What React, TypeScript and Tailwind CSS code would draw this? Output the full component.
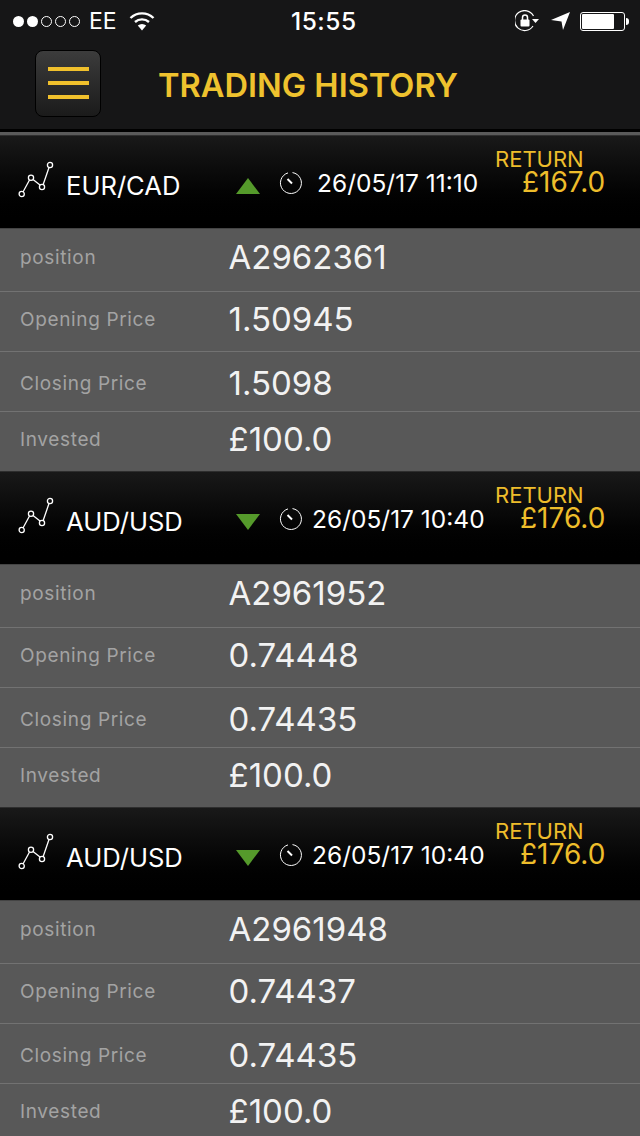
const trades = [
  { pair: "EUR/CAD", up: true, date: "26/05/17 11:10", ret: "£167.0", position: "A2962361", open: "1.50945", close: "1.5098" },
  { pair: "AUD/USD", up: false, date: "26/05/17 10:40", ret: "£176.0", position: "A2961952", open: "0.74448", close: "0.74435" },
  { pair: "AUD/USD", up: false, date: "26/05/17 10:40", ret: "£176.0", position: "A2961948", open: "0.74437", close: "0.74435" },
];

function ChartIcon() {
  return (
    <svg width="38" height="38" viewBox="0 0 38 38" fill="none" stroke="white" strokeWidth="1.3" className="shrink-0">
      <path d="M5 32 L11.5 20 M15 19.5 L22 25 M25 25 L31 7.5" />
      <circle cx="3.7" cy="34" r="2.6" />
      <circle cx="13" cy="17.7" r="2.6" />
      <circle cx="24" cy="27" r="2.6" />
      <circle cx="32" cy="5" r="2.6" />
    </svg>
  );
}

function ClockIcon() {
  return (
    <svg width="24" height="24" viewBox="0 0 24 24" fill="none" stroke="white" className="shrink-0">
      <path d="M13.5 1.6 A10.5 10.5 0 1 1 9 1.9" strokeWidth="1" />
      <path d="M8.5 8 L13 12.5" strokeWidth="2" />
    </svg>
  );
}

function Row({ label, value, height, border }: { label: string; value: string; height: string; border?: boolean }) {
  return (
    <div className={`flex items-center ${height} ${border ? "border-b border-[#727272]" : ""}`}>
      <div className="w-[228.5px] pl-5 text-[19px] tracking-[0.65px] text-[#a3a3a3]">{label}</div>
      <div className="-mt-[2px] text-[33px] leading-none text-[#f2f2f2]">{value}</div>
    </div>
  );
}

function Trade({ trade }: { trade: (typeof trades)[number] }) {
  return (
    <section>
      <div className="flex h-[94px] items-center border-t border-[#2e2e2e] border-b-[#444] border-b bg-gradient-to-b from-[#191919] via-[#070707] to-black">
        <div className="ml-[18px] w-[48px] -mt-1.5">
          <ChartIcon />
        </div>
        <div className="w-[169px] text-[25.6px] text-white mt-[8px]">{trade.pair}</div>
        <svg width="26" height="16" viewBox="0 0 26 16" className="shrink-0 mt-2">
          <polygon points={trade.up ? "13,0 25,16 1,16" : "1,0 25,0 13,16"} fill="#559a2b" />
        </svg>
        <div className="ml-[18px] w-[27px] mt-[2px]">
          <ClockIcon />
        </div>
        <div className={`${trade.up ? "ml-[11px] w-[178px]" : "ml-[6px] w-[183px]"} text-[24.5px] leading-none text-white mt-[3px] whitespace-nowrap`}>
          {trade.date}
        </div>
        <div className="-mt-[22px] w-[113px] text-[#eebd2b]">
          <div className="text-[22px] leading-[22px]">RETURN</div>
          <div className={`${trade.up ? "pl-[27px]" : "pl-[25px]"} text-[28px] leading-[24px]`}>{trade.ret}</div>
        </div>
      </div>
      <div className="bg-[#585858]">
        <Row label="position" value={trade.position} height="h-[63px] pb-1" border />
        <Row label="Opening Price" value={trade.open} height="h-[60px] pb-[2px]" border />
        <Row label="Closing Price" value={trade.close} height="h-[60px] pt-[6px]" border />
        <Row label="Invested" value="£100.0" height="h-[59px] pb-[3px]" />
      </div>
    </section>
  );
}

export default function App() {
  return (
    <div className="h-[1136px] w-[640px] overflow-hidden bg-[#585858] font-['Inter','Liberation_Sans',sans-serif]">
      <header className="h-[135px] bg-[#161617]">
        <div className="flex h-10 items-center pl-[13px] pt-[2px] text-white">
          <div className="flex gap-[3px]">
            <span className="h-[11px] w-[11px] rounded-full bg-white" />
            <span className="h-[11px] w-[11px] rounded-full bg-white" />
            <span className="h-[11px] w-[11px] rounded-full border border-white" />
            <span className="h-[11px] w-[11px] rounded-full border border-white" />
            <span className="h-[11px] w-[11px] rounded-full border border-white" />
          </div>
          <span className="ml-[9px] w-[27px] text-[23px] leading-none">EE</span>
          <svg width="26" height="20" viewBox="0 0 26 20" className="ml-[13px]" fill="none" stroke="white" strokeWidth="2.4">
            <path d="M1.5 7 A16.5 16.5 0 0 1 24.5 7" />
            <path d="M6 11 A10.5 10.5 0 0 1 20 11" />
            <path d="M13 19.5 L8.8 14.6 A6 6 0 0 1 17.2 14.6 Z" fill="white" stroke="none" />
          </svg>
          <span className="ml-[136px] w-[72px] text-[24.5px] font-medium leading-none tracking-[0.5px]">15:55</span>
          <svg width="24" height="22" viewBox="0 0 24 22" className="ml-[152px]" fill="none" stroke="white">
            <path d="M18 16 A10 10 0 1 1 18.5 6" strokeWidth="1.2" />
            <path d="M17 9 L24 9 L20.5 13 Z" fill="white" stroke="none" />
            <rect x="5.5" y="9.5" width="9" height="7" rx="1" fill="white" stroke="none" />
            <path d="M7.5 10 V7.5 A2.5 2.5 0 0 1 12.5 7.5 V10" strokeWidth="1.5" />
          </svg>
          <svg width="20" height="20" viewBox="0 0 20 20" className="ml-[12px]">
            <path d="M0 9 L19 1 L12 19 L10.5 10.5 Z" fill="white" />
          </svg>
          <div className="ml-[9px] flex h-[19px] w-[45px] items-center rounded-[3px] border border-white p-[1px]">
            <div className="h-full w-[32px] rounded-[1px] bg-white" />
          </div>
          <div className="ml-[1px] h-[7px] w-[3px] rounded-r-sm bg-white" />
        </div>
        <div className="flex h-[89px] items-center pl-[35px]">
          <button className="flex h-[67px] w-[66px] flex-col items-center justify-center gap-[10px] rounded-lg border border-black bg-gradient-to-b from-[#3c3c3c] to-[#1b1b1b] -mt-[3px]">
            <span className="h-[4px] w-[41px] bg-[#f0c02c]" />
            <span className="h-[4px] w-[41px] bg-[#f0c02c]" />
            <span className="h-[4px] w-[41px] bg-[#f0c02c]" />
          </button>
          <h1 className="ml-[57px] text-[32.6px] font-semibold leading-none text-[#efc22e] mt-[1px]">TRADING HISTORY</h1>
        </div>
        <div className="h-[3px] bg-black" />
        <div className="h-[3px] bg-[#5a5a5a]" />
      </header>
      {trades.map((trade) => (
        <Trade key={trade.position} trade={trade} />
      ))}
    </div>
  );
}
